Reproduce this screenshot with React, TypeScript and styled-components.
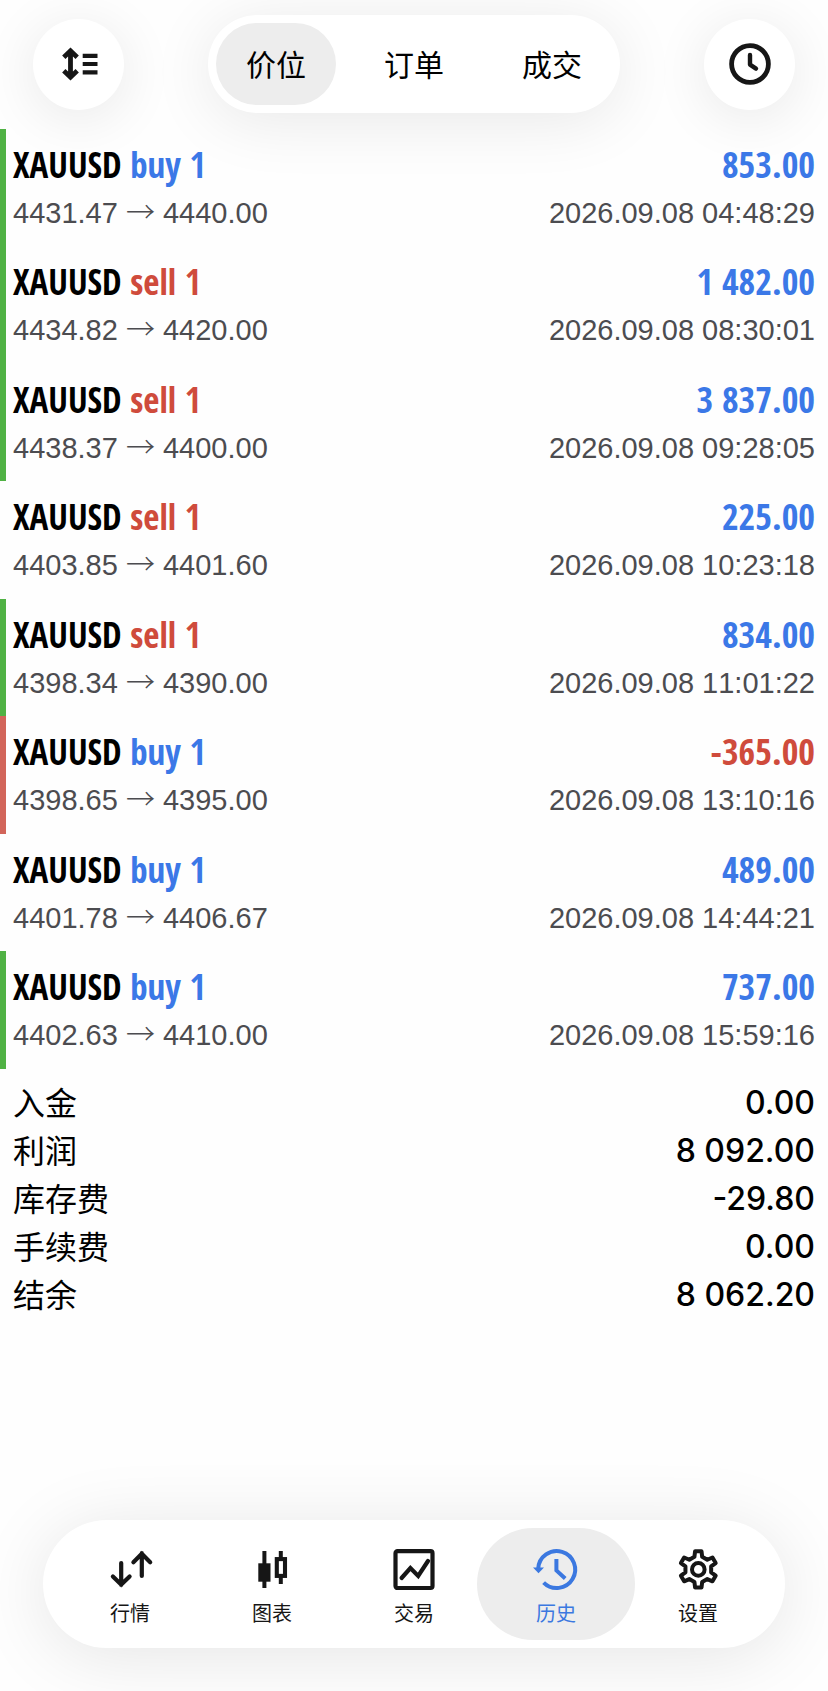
import React, { useState } from 'react';
import styled, { createGlobalStyle } from 'styled-components';

const cjk = '"Noto Sans CJK SC", sans-serif';

const GlobalStyle = createGlobalStyle`
  *, *::before, *::after { box-sizing: border-box; }
  body {
    margin: 0;
    background: #fefefe;
    color: #000;
    font-family: ${cjk};
  }
  button { font: inherit; color: inherit; border: 0; background: none; padding: 0; cursor: pointer; }
  ul, dl, dd { margin: 0; padding: 0; list-style: none; }
`;

const Page = styled.div`
  min-height: 100vh;
  display: flex;
  flex-direction: column;
`;

const Header = styled.header`
  display: flex;
  align-items: center;
  justify-content: space-between;
  padding: 15px 33px 16px;
`;

const RoundButton = styled.button`
  display: grid;
  place-items: center;
  width: 91px;
  height: 91px;
  border-radius: 50%;
  background: #fff;
  color: #161616;
  box-shadow: 0 8px 56px rgba(0, 0, 0, 0.09);
`;

const Segments = styled.div`
  display: flex;
  gap: 18px;
  padding: 8px;
  border-radius: 49px;
  background: #fff;
  box-shadow: 0 8px 64px rgba(0, 0, 0, 0.09);
`;

const Segment = styled.button<{ $active: boolean }>`
  width: 120px;
  height: 82px;
  padding-bottom: 3px;
  border-radius: 41px;
  font-size: 30px;
  line-height: 44px;
  background: ${(p) => (p.$active ? '#ededed' : 'transparent')};
`;

const Icon = styled.svg`
  display: block;
  width: 44px;
  height: 44px;
  overflow: visible;
  fill: none;
  stroke: currentColor;
`;

const markColors = { green: '#50b244', red: '#d2655a', none: 'transparent' };

const DealItem = styled.li<{ $mark: Mark }>`
  padding: 12px 13px 9px 7px;
  border-left: 6px solid ${(p) => markColors[p.$mark]};
  &:nth-child(even) { padding-bottom: 10px; }
`;

const Line = styled.div`
  display: flex;
  justify-content: space-between;
  height: 48px;
  line-height: 48px;
  white-space: nowrap;
`;

const Title = styled.span`
  font: 700 35px/48px "Open Sans Condensed", "Liberation Sans Narrow", "Liberation Sans", sans-serif;
`;

const Side = styled.span<{ $side: 'buy' | 'sell' }>`
  color: ${(p) => (p.$side === 'buy' ? '#3b78e7' : '#cf4b3c')};
`;

const Profit = styled.span<{ $loss: boolean }>`
  font: 700 36px/48px "Open Sans Condensed", "Liberation Sans Narrow", "Liberation Sans", sans-serif;
  color: ${(p) => (p.$loss ? '#cf4b3c' : '#3b78e7')};
`;

const Detail = styled.span`
  font: 400 29px/48px "Liberation Sans", sans-serif;
  font-kerning: none;
  color: #4c4c50;
`;

const Arrow = styled.span`
  font-family: ${cjk};
  font-weight: 300;
  line-height: 1;
`;

const Summary = styled.dl`
  padding: 10px 13px 24px;
`;

const SummaryRow = styled.div`
  display: flex;
  justify-content: space-between;
  height: 48px;
`;

const SummaryLabel = styled.dt`
  font-size: 32px;
  line-height: 44px;
`;

const SummaryValue = styled.dd`
  font: 500 32px/48px Inter, sans-serif;
`;

const TabBar = styled.nav`
  position: sticky;
  bottom: 43px;
  display: flex;
  margin: auto 43px 43px;
  padding: 8px 16px;
  border-radius: 64px;
  background: #fff;
  box-shadow: 0 8px 72px rgba(0, 0, 0, 0.1);
`;

const Tab = styled.button<{ $active: boolean }>`
  flex: 1;
  display: flex;
  flex-direction: column;
  align-items: center;
  gap: 9px;
  height: 112px;
  margin: 0 -8px;
  padding-top: 20px;
  border-radius: 56px;
  font-size: 20px;
  line-height: 24px;
  color: ${(p) => (p.$active ? '#3b78e0' : '#161616')};
  background: ${(p) => (p.$active ? '#ededed' : 'transparent')};
`;

const SortIcon = () => (
  <Icon viewBox="0 0 44 44" aria-hidden="true">
    <path d="M13.5 9V35M6.8 15.2L13.5 8.8L20.2 15.2M6.8 28.8L13.5 35.2L20.2 28.8" strokeWidth="4.8" />
    <path d="M25.7 13.8H40.5M25.7 22H40.5M25.7 30.4H40.5" strokeWidth="4.2" />
  </Icon>
);

const ClockIcon = () => (
  <Icon viewBox="0 0 44 44" aria-hidden="true">
    <circle cx="22" cy="22" r="18.4" strokeWidth="4.8" />
    <path d="M22 13V22.6L28 26.6" strokeWidth="4.4" strokeLinecap="round" strokeLinejoin="round" />
  </Icon>
);

const QuotesIcon = () => (
  <Icon viewBox="0 0 44 44" strokeWidth="4.2" strokeLinecap="round" aria-hidden="true">
    <path d="M13.2 15V37M4.9 28.5L13.2 36.6L21.6 28.5" />
    <path d="M33.8 28V5.2M25.4 14.2L33.8 5.8L42.2 14.2" />
  </Icon>
);

const CandlesIcon = () => (
  <Icon viewBox="0 0 44 44" strokeWidth="4" aria-hidden="true">
    <path d="M14.4 3V40M30.8 3V10M30.8 29V36" />
    <rect x="8.3" y="15.3" width="12.2" height="18.4" fill="currentColor" stroke="none" />
    <rect x="26.8" y="11.1" width="8.2" height="16.8" strokeWidth="4.1" />
  </Icon>
);

const TradeIcon = () => (
  <Icon viewBox="0 0 44 44" strokeWidth="4.2" aria-hidden="true">
    <rect x="3.5" y="3.2" width="37" height="36.8" rx="2" />
    <path d="M9.6 30L18.4 20L26.2 28L36 13" strokeLinecap="round" />
  </Icon>
);

const HistoryIcon = () => (
  <Icon viewBox="0 0 44 44" strokeWidth="4" aria-hidden="true">
    <path d="M4.2 20.6A18.5 18.5 0 1 1 9.6 34.6" />
    <path d="M-1 19.4H10L4.5 25.2Z" fill="currentColor" stroke="none" />
    <path d="M22.4 11V22.4L31.2 30.4" />
  </Icon>
);

// Six teeth, each given by its two foot points and two tip points (angle, radius).
const gearPoints = [0, 60, 120, 180, 240, 300]
  .flatMap((a) => [[a - 17, 13.2], [a - 10, 18.5], [a + 10, 18.5], [a + 17, 13.2]])
  .map(([deg, r]) => {
    const t = (deg * Math.PI) / 180;
    return `${(22.3 + r * Math.sin(t)).toFixed(2)},${(21.4 - r * Math.cos(t)).toFixed(2)}`;
  })
  .join(' ');

const SettingsIcon = () => (
  <Icon viewBox="0 0 44 44" strokeWidth="4" strokeLinejoin="round" aria-hidden="true">
    <polygon points={gearPoints} />
    <circle cx="22.3" cy="21.4" r="6.3" />
  </Icon>
);

type Mark = 'green' | 'red' | 'none';

interface Deal {
  side: 'buy' | 'sell';
  open: string;
  close: string;
  profit: string;
  time: string;
  mark: Mark;
}

const deals: Deal[] = [
  { side: 'buy', open: '4431.47', close: '4440.00', profit: '853.00', time: '2026.09.08 04:48:29', mark: 'green' },
  { side: 'sell', open: '4434.82', close: '4420.00', profit: '1 482.00', time: '2026.09.08 08:30:01', mark: 'green' },
  { side: 'sell', open: '4438.37', close: '4400.00', profit: '3 837.00', time: '2026.09.08 09:28:05', mark: 'green' },
  { side: 'sell', open: '4403.85', close: '4401.60', profit: '225.00', time: '2026.09.08 10:23:18', mark: 'none' },
  { side: 'sell', open: '4398.34', close: '4390.00', profit: '834.00', time: '2026.09.08 11:01:22', mark: 'green' },
  { side: 'buy', open: '4398.65', close: '4395.00', profit: '-365.00', time: '2026.09.08 13:10:16', mark: 'red' },
  { side: 'buy', open: '4401.78', close: '4406.67', profit: '489.00', time: '2026.09.08 14:44:21', mark: 'none' },
  { side: 'buy', open: '4402.63', close: '4410.00', profit: '737.00', time: '2026.09.08 15:59:16', mark: 'green' },
];

const totals = [
  ['入金', '0.00'],
  ['利润', '8 092.00'],
  ['库存费', '-29.80'],
  ['手续费', '0.00'],
  ['结余', '8 062.20'],
];

const tabs = [
  { label: '行情', icon: <QuotesIcon /> },
  { label: '图表', icon: <CandlesIcon /> },
  { label: '交易', icon: <TradeIcon /> },
  { label: '历史', icon: <HistoryIcon /> },
  { label: '设置', icon: <SettingsIcon /> },
];

export default function App() {
  const [segment, setSegment] = useState('价位');
  const [tab, setTab] = useState('历史');

  return (
    <Page>
      <GlobalStyle />
      <Header>
        <RoundButton type="button" aria-label="排序"><SortIcon /></RoundButton>
        <Segments>
          {['价位', '订单', '成交'].map((s) => (
            <Segment key={s} type="button" $active={s === segment} aria-pressed={s === segment} onClick={() => setSegment(s)}>
              {s}
            </Segment>
          ))}
        </Segments>
        <RoundButton type="button" aria-label="时段"><ClockIcon /></RoundButton>
      </Header>
      <main>
        <ul>
          {deals.map((d) => (
            <DealItem key={d.time} $mark={d.mark}>
              <Line>
                <Title>XAUUSD <Side $side={d.side}>{d.side} 1</Side></Title>
                <Profit $loss={d.profit.startsWith('-')}>{d.profit}</Profit>
              </Line>
              <Line>
                <Detail>{d.open} <Arrow>→</Arrow> {d.close}</Detail>
                <Detail>{d.time}</Detail>
              </Line>
            </DealItem>
          ))}
        </ul>
        <Summary>
          {totals.map(([label, value]) => (
            <SummaryRow key={label}>
              <SummaryLabel>{label}</SummaryLabel>
              <SummaryValue>{value}</SummaryValue>
            </SummaryRow>
          ))}
        </Summary>
      </main>
      <TabBar>
        {tabs.map((t) => (
          <Tab key={t.label} type="button" $active={t.label === tab} aria-current={t.label === tab ? 'page' : undefined} onClick={() => setTab(t.label)}>
            {t.icon}
            {t.label}
          </Tab>
        ))}
      </TabBar>
    </Page>
  );
}
